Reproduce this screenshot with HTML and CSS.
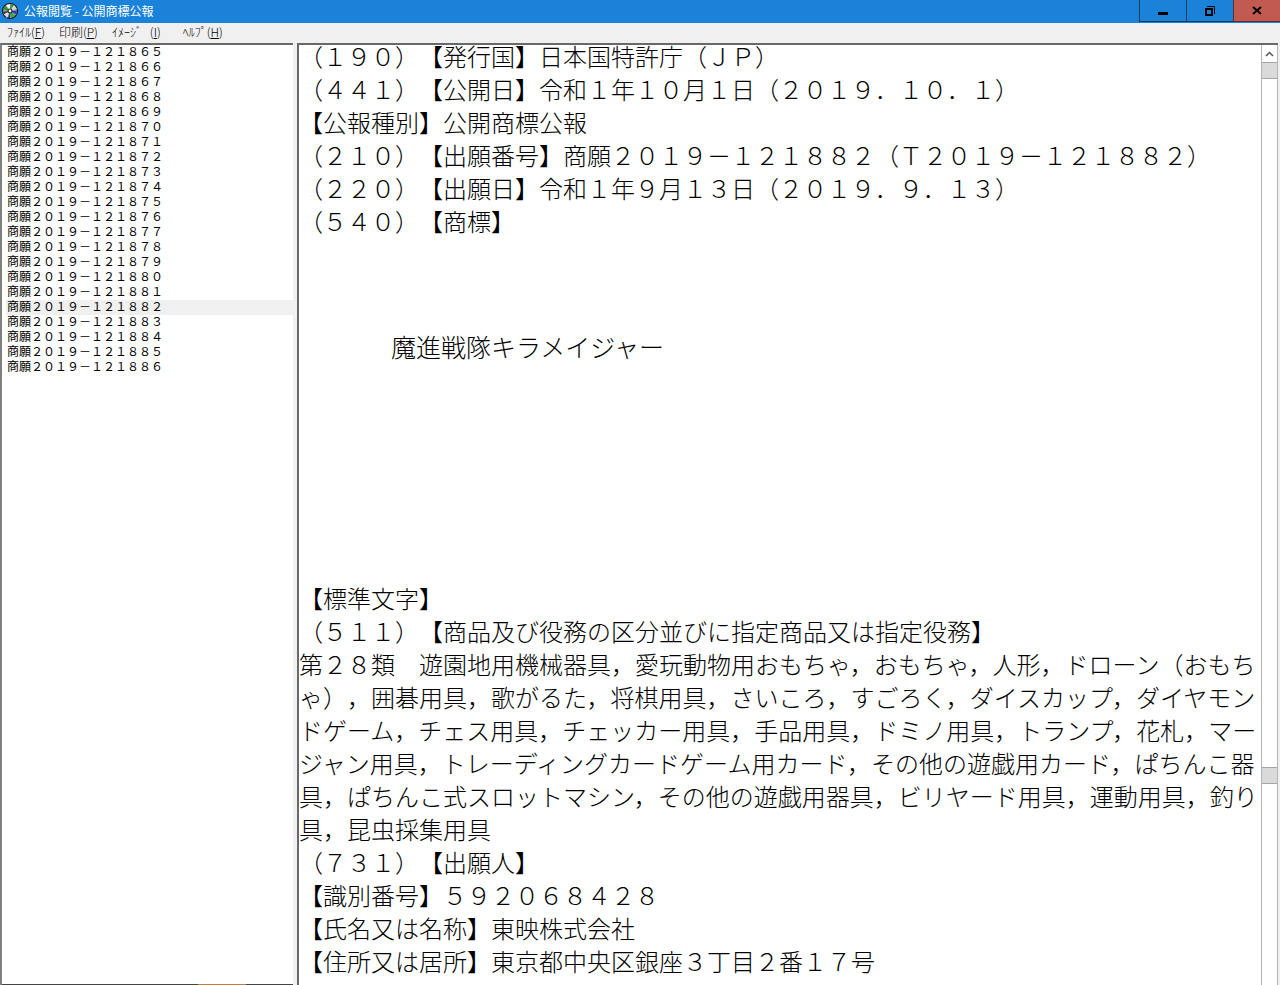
FILE: index.html
```html
<!DOCTYPE html>
<html lang="ja">
<head>
<meta charset="utf-8">
<title>公報閲覧 - 公開商標公報</title>
<link rel="stylesheet" href="styles.css">
</head>
<body>
<div class="window">
  <header class="titlebar">
    <svg class="app-icon" viewBox="0 0 16 16" width="16" height="16" aria-hidden="true">
      <circle cx="8" cy="8" r="8" fill="#111"/>
      <circle cx="8" cy="8" r="7" fill="#8f938f"/>
      <path d="M8 8 4 2 8 1Z" fill="#f4f4f4"/>
      <path d="M8 8 9 1 12 2Z" fill="#1fa53a"/>
      <path d="M8 8 12 2 15 6Z" fill="#d8d8d8"/>
      <path d="M8 8 1 6 3 3Z" fill="#17962e"/>
      <path d="M8 8 15 8 14 11Z" fill="#2438c8"/>
      <path d="M8 8 13 13 9 15Z" fill="#25b53e"/>
      <path d="M8 8 5 15 2 11Z" fill="#ddd"/>
      <path d="M8 8 8 15 6 15Z" fill="#2a30a8"/>
      <path d="M8 8 1 9 2 11Z" fill="#333"/>
      <circle cx="8" cy="8" r="2.5" fill="#222"/>
      <circle cx="8" cy="8" r="1.4" fill="#fff"/>
    </svg>
    <h1 class="title">公報閲覧 - 公開商標公報</h1>
    <div class="controls">
      <button class="control" aria-label="最小化"><svg viewBox="0 0 12 12" width="12" height="12"><path d="M1 7h10v3H1z"/></svg></button>
      <button class="control" aria-label="元に戻す"><svg viewBox="0 0 12 12" width="12" height="12"><path d="M3 1.500h7.500V9" fill="none" stroke="#000"/><path d="M2 4h6v6H2z" fill="none" stroke="#000" stroke-width="2"/></svg></button>
      <button class="control control-close" aria-label="閉じる"><svg viewBox="0 0 12 12" width="12" height="12"><path d="M2 2l8 7M10 2L2 9" fill="none" stroke="#000" stroke-width="2"/></svg></button>
    </div>
  </header>
  <nav class="menubar">
    <button class="menu">ﾌｧｲﾙ(<u>F</u>)</button>
    <button class="menu">印刷(<u>P</u>)</button>
    <button class="menu">ｲﾒｰｼﾞ &nbsp; (<u>I</u>)</button>
    <button class="menu">&nbsp;&nbsp;&nbsp;ﾍﾙﾌﾟ(<u>H</u>)</button>
  </nav>
  <main class="panes">
    <div class="list-pane">
      <ul class="list">
        <li><button class="entry">商願２０１９－１２１８６５</button></li>
        <li><button class="entry">商願２０１９－１２１８６６</button></li>
        <li><button class="entry">商願２０１９－１２１８６７</button></li>
        <li><button class="entry">商願２０１９－１２１８６８</button></li>
        <li><button class="entry">商願２０１９－１２１８６９</button></li>
        <li><button class="entry">商願２０１９－１２１８７０</button></li>
        <li><button class="entry">商願２０１９－１２１８７１</button></li>
        <li><button class="entry">商願２０１９－１２１８７２</button></li>
        <li><button class="entry">商願２０１９－１２１８７３</button></li>
        <li><button class="entry">商願２０１９－１２１８７４</button></li>
        <li><button class="entry">商願２０１９－１２１８７５</button></li>
        <li><button class="entry">商願２０１９－１２１８７６</button></li>
        <li><button class="entry">商願２０１９－１２１８７７</button></li>
        <li><button class="entry">商願２０１９－１２１８７８</button></li>
        <li><button class="entry">商願２０１９－１２１８７９</button></li>
        <li><button class="entry">商願２０１９－１２１８８０</button></li>
        <li><button class="entry">商願２０１９－１２１８８１</button></li>
        <li><button class="entry selected">商願２０１９－１２１８８２</button></li>
        <li><button class="entry">商願２０１９－１２１８８３</button></li>
        <li><button class="entry">商願２０１９－１２１８８４</button></li>
        <li><button class="entry">商願２０１９－１２１８８５</button></li>
        <li><button class="entry">商願２０１９－１２１８８６</button></li>
      </ul>
      <div class="edge"><span class="edge-mark"></span></div>
    </div>
    <div class="splitter"></div>
    <div class="doc-pane">
      <article class="doc">
        <p class="lead">（１９０）【発行国】日本国特許庁（ＪＰ）</p>
        <p>（４４１）【公開日】令和１年１０月１日（２０１９．１０．１）</p>
        <p>【公報種別】公開商標公報</p>
        <p>（２１０）【出願番号】商願２０１９－１２１８８２（Ｔ２０１９－１２１８８２）</p>
        <p>（２２０）【出願日】令和１年９月１３日（２０１９．９．１３）</p>
        <p>（５４０）【商標】</p>
        <div class="mark">魔進戦隊キラメイジャー</div>
        <p>【標準文字】</p>
        <p>（５１１）【商品及び役務の区分並びに指定商品又は指定役務】</p>
        <p>第２８類　遊園地用機械器具，愛玩動物用おもちゃ，おもちゃ，人形，ドローン（おもち<br>ゃ），囲碁用具，歌がるた，将棋用具，さいころ，すごろく，ダイスカップ，ダイヤモン<br>ドゲーム，チェス用具，チェッカー用具，手品用具，ドミノ用具，トランプ，花札，マー<br>ジャン用具，トレーディングカードゲーム用カード，その他の遊戯用カード，ぱちんこ器<br>具，ぱちんこ式スロットマシン，その他の遊戯用器具，ビリヤード用具，運動用具，釣り<br>具，昆虫採集用具</p>
        <p>（７３１）【出願人】</p>
        <p>【識別番号】５９２０６８４２８</p>
        <p>【氏名又は名称】東映株式会社</p>
        <p>【住所又は居所】東京都中央区銀座３丁目２番１７号</p>
      </article>
      <div class="scrollbar">
        <button class="scroll-up" aria-label="上へ"><svg viewBox="0 0 9 6" width="9" height="6"><path d="M1 5l3.500-3.500L8 5" fill="none" stroke="#555" stroke-width="1.500"/></svg></button>
        <span class="thumb"></span>
        <span class="track-upper"></span>
        <span class="thumb"></span>
        <span class="track-lower"></span>
      </div>
    </div>
  </main>
</div>
</body>
</html>
```
FILE: styles.css
```css
* { box-sizing: border-box; }

body {
  margin: 0;
  background: #f0f0f0;
  color: #000;
  font-family: "Noto Sans CJK JP", sans-serif;
  font-size: 12px;
  text-spacing-trim: space-all;
}

button {
  border: 0;
  padding: 0;
  background: none;
  color: inherit;
  font: inherit;
}

.window {
  display: flex;
  flex-direction: column;
  height: 100vh;
  overflow: hidden;
}

.titlebar {
  display: flex;
  align-items: flex-start;
  height: 23px;
  flex: none;
  padding-left: 2px;
  background: #1a82d9;
}

.app-icon { margin: 3px 6px 0 0; }

.title {
  flex: 1;
  margin: 0;
  color: #fff;
  font-size: 12px;
  font-weight: 400;
  line-height: 22px;
}

.controls { display: flex; height: 22px; }

.control {
  display: flex;
  align-items: center;
  justify-content: center;
  width: 47px;
  border: 1px solid #173f63;
  border-top: 0;
  border-right: 0;
}

.control-close {
  background: #c25a51;
  border-color: #5a3033;
}

.menubar {
  display: flex;
  align-items: flex-start;
  flex: none;
  gap: 14px;
  height: 20px;
  padding-left: 7px;
}

.menu {
  font-weight: 300;
  line-height: 18px;
  white-space: nowrap;
}

.panes {
  display: flex;
  flex: 1;
  min-height: 0;
}

.list-pane {
  display: flex;
  flex-direction: column;
  width: 293px;
  flex: none;
  background: #fff;
  border-top: 2px solid #696969;
  border-left: 2px solid #808080;
}

.list {
  flex: 1;
  margin: 0;
  padding: 0 0 0 4px;
  list-style: none;
}

.entry {
  display: block;
  width: 100%;
  height: 15px;
  padding: 0 0 4px 1px;
  line-height: 11px;
  text-align: left;
  white-space: nowrap;
}

.selected { background: #f0f0f0; }

.edge {
  display: flex;
  height: 1px;
  background: #444;
}

.edge-mark {
  width: 48px;
  margin-left: 196px;
  background: #c97a35;
}

.splitter {
  width: 4px;
  flex: none;
  background: #f0f0f0;
}

.doc-pane {
  display: flex;
  flex: 1;
  min-width: 0;
  margin-right: 2px;
  background: #fff;
  border-top: 2px solid #696969;
  border-left: 2px solid #696969;
}

.doc {
  flex: 1;
  min-width: 0;
  font-size: 24px;
  font-weight: 300;
  line-height: 33px;
  white-space: nowrap;
}

.doc p { margin: 0; }

.doc .lead {
  margin-bottom: 5px;
  line-height: 22px;
}

.mark {
  height: 344px;
  padding: 93px 0 0 92px;
  font-size: 25px;
}

.scrollbar {
  display: flex;
  flex-direction: column;
  width: 17px;
  flex: none;
  border: 1px solid #b4b4b4;
  border-top: 0;
  border-bottom: 0;
}

.scroll-up {
  display: flex;
  align-items: center;
  justify-content: center;
  height: 17px;
}

.thumb {
  height: 17px;
  background: #dadada;
  border: 1px solid #a6a6a6;
  border-left: 0;
  border-right: 0;
}

.track-upper { flex: 688; }
.track-lower { flex: 201; }
```
